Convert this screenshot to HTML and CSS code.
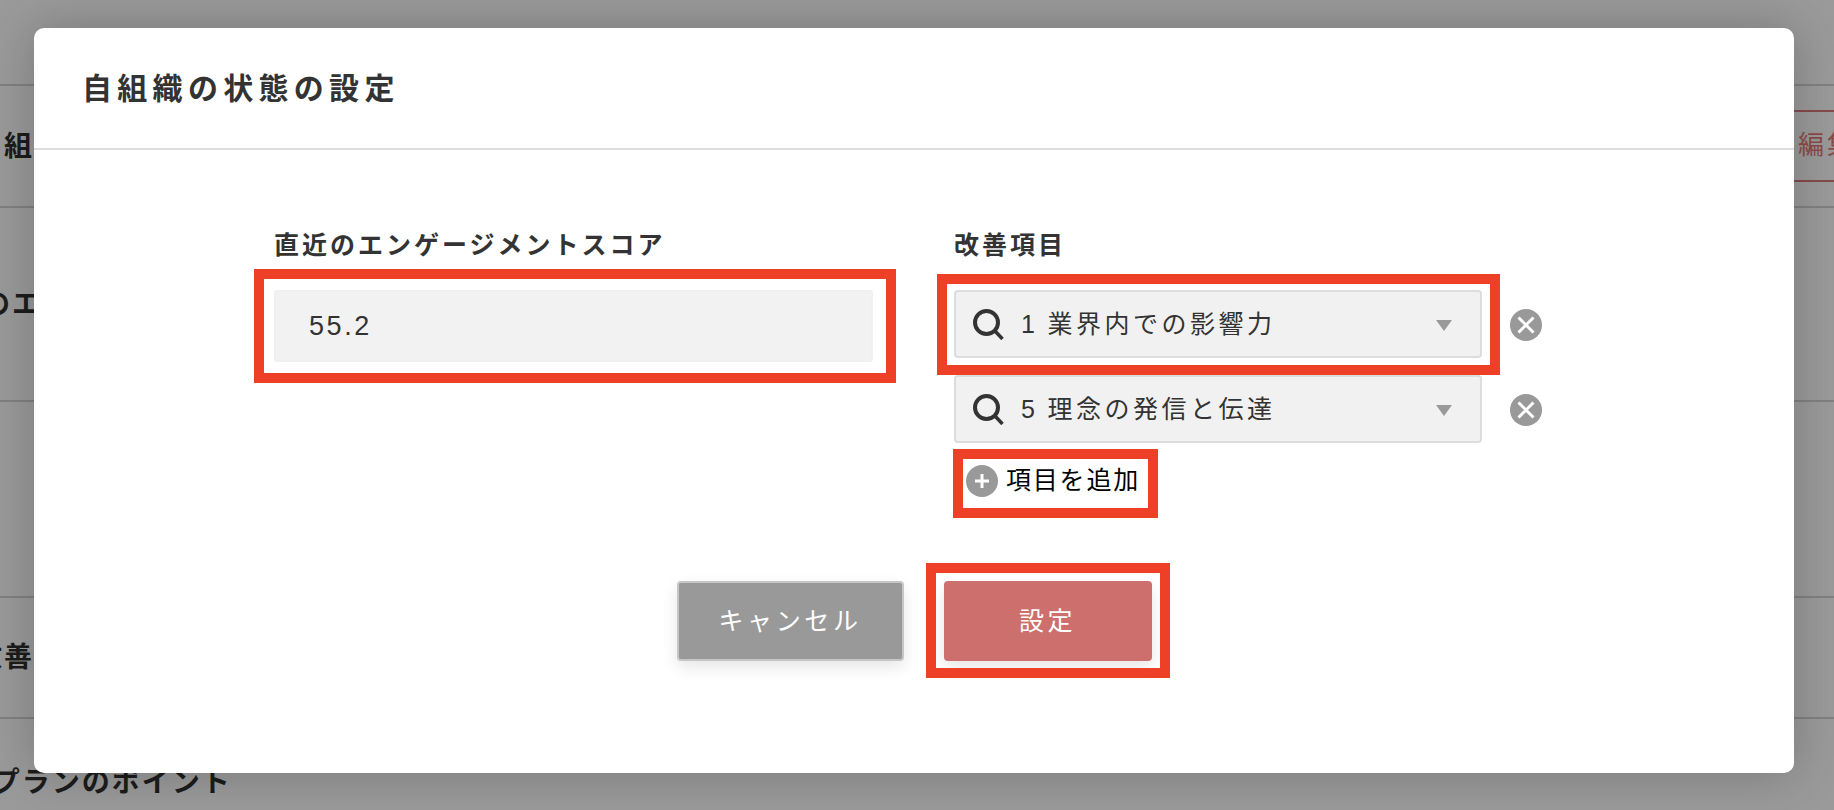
FILE: index.html
```html
<!DOCTYPE html>
<html lang="ja">
<head>
    <title>自組織の状態の設定</title>
    <meta name="viewport" content="width=device-width, initial-scale=1.0">
    <link rel="stylesheet" href="styles.css">
</head>
<body>
    <!-- page behind the dialog -->
    <div class="page">
        <div class="page-row row-first">
            <span class="page-label label-org">自組織の状態</span>
            <span class="edit-btn">編集</span>
        </div>
        <div class="page-row row-score">
            <span class="page-label label-score">直近のエンゲージメントスコア</span>
        </div>
        <div class="page-row row-empty"></div>
        <div class="page-row row-items">
            <span class="page-label label-items">改善項目</span>
        </div>
        <div class="page-row row-plan">
            <span class="page-label label-plan">アクションプランのポイント</span>
        </div>
    </div>

    <div class="modal">
        <div class="modal-header">
            <h1 class="modal-title">自組織の状態の設定</h1>
        </div>

        <div class="modal-body">
            <div class="form-cols">
                <div class="col-score">
                    <div class="field-label">直近のエンゲージメントスコア</div>
                    <div class="score-input">
                        <span>55.2</span>
                        <i class="mark mark-score"></i>
                    </div>
                </div>

                <div class="col-items">
                    <div class="field-label">改善項目</div>
                    <div class="item-row">
                        <div class="item-select">
                            <svg class="search-icon" viewBox="0 0 31 31" fill="none" stroke="currentColor">
                                <circle cx="13.5" cy="13.5" r="11.5" stroke-width="4"/>
                                <path d="M21.5 21.5L29.5 30" stroke-width="3.5"/>
                            </svg>
                            <span class="item-text"><span class="item-no">1</span>業界内での影響力</span>
                            <span class="item-arrow"></span>
                            <i class="mark mark-item"></i>
                        </div>
                        <svg class="round-icon remove-icon" viewBox="0 0 32 32">
                            <circle cx="16" cy="16" r="16" fill="#999"/>
                            <path d="M8.5 8.5L23.5 23.5M23.5 8.5L8.5 23.5" stroke="#fff" stroke-width="3"/>
                        </svg>
                    </div>
                    <div class="item-row item-row-second">
                        <div class="item-select">
                            <svg class="search-icon" viewBox="0 0 31 31" fill="none" stroke="currentColor">
                                <circle cx="13.5" cy="13.5" r="11.5" stroke-width="4"/>
                                <path d="M21.5 21.5L29.5 30" stroke-width="3.5"/>
                            </svg>
                            <span class="item-text"><span class="item-no">5</span>理念の発信と伝達</span>
                            <span class="item-arrow"></span>
                        </div>
                        <svg class="round-icon remove-icon" viewBox="0 0 32 32">
                            <circle cx="16" cy="16" r="16" fill="#999"/>
                            <path d="M8.5 8.5L23.5 23.5M23.5 8.5L8.5 23.5" stroke="#fff" stroke-width="3"/>
                        </svg>
                    </div>
                    <div class="add-item">
                        <svg class="round-icon" viewBox="0 0 32 32">
                            <circle cx="16" cy="16" r="16" fill="#999"/>
                            <path d="M16 9V23M9 16H23" stroke="#fff" stroke-width="3"/>
                        </svg>
                        <span class="add-text">項目を追加</span>
                        <i class="mark mark-add"></i>
                    </div>
                </div>
            </div>

            <div class="button-group">
                <button class="btn btn-cancel">キャンセル</button>
                <button class="btn btn-save">設定<i class="mark mark-save"></i></button>
            </div>
        </div>
    </div>
</body>
</html>
```

FILE: styles.css
```css
:root {
    --overlay: #9a9a9a;
    --line: #818181;
    --mark: #ee4026;
    --text: #333333;
    --field: #f1f1f1;
}

* {
    box-sizing: border-box;
}

html, body {
    height: 100%;
}

body {
    margin: 0;
    background: var(--overlay);
    color: var(--text);
    font-family: "Liberation Sans", "Noto Sans CJK JP", sans-serif;
    overflow: hidden;
}

/* page behind the dialog */
.page {
    padding-top: 84px;
}

.page-row {
    display: flex;
    align-items: center;
    justify-content: space-between;
    border-top: 2px solid var(--line);
    white-space: nowrap;
}

.row-first { height: 122px; }
.row-score { height: 194px; }
.row-empty { height: 196px; }
.row-items { height: 121px; }
.row-plan { height: 128px; }

.page-label {
    padding-bottom: 5px;
    font-size: 28px;
    font-weight: 700;
    letter-spacing: 2px;
    color: #1c1c1c;
}

.label-org { margin-left: -26px; }
.label-score { margin-left: -78px; }
.label-items { margin-left: -26px; }
.label-plan { margin-left: -156px; }

.edit-btn {
    flex: none;
    width: 120px;
    height: 72px;
    margin-right: -80px;
    padding-left: 4px;
    border-top: 2px solid #864b4b;
    border-bottom: 2px solid #864b4b;
    color: #8c4a4a;
    font-size: 26px;
    line-height: 66px;
    letter-spacing: 3px;
}

/* dialog */
.modal {
    position: absolute;
    top: 28px;
    left: 34px;
    width: 1760px;
    height: 745px;
    background: #fff;
    border-radius: 10px;
    box-shadow: 0 0 50px rgba(0, 0, 0, 0.22);
}

.modal-header {
    height: 122px;
    padding: 40px 0 0 48px;
    border-bottom: 2px solid #dddddd;
}

.modal-title {
    margin: 0;
    font-size: 30px;
    line-height: 42px;
    font-weight: 700;
    letter-spacing: 5.3px;
}

.modal-body {
    padding: 75px 0 0 240px;
}

.form-cols {
    display: flex;
    gap: 81px;
}

.col-score {
    width: 599px;
}

.field-label {
    height: 36px;
    margin-bottom: 29px;
    padding-top: 2px;
    font-size: 25px;
    line-height: 36px;
    font-weight: 700;
    letter-spacing: 3px;
    white-space: nowrap;
}

.score-input {
    position: relative;
    height: 72px;
    padding-left: 33px;
    background: #f2f2f2;
    border: 2px solid #f0f0f0;
    border-radius: 3px;
    font-size: 27px;
    line-height: 68px;
    letter-spacing: 2.6px;
}

.item-row {
    display: flex;
    align-items: center;
    gap: 28px;
    margin-bottom: 17px;
}

.item-select {
    position: relative;
    display: flex;
    align-items: center;
    width: 528px;
    height: 68px;
    padding: 0 28px 0 17px;
    background: var(--field);
    border: 2px solid #dddddd;
    border-radius: 4px;
}

.search-icon {
    flex: none;
    width: 31px;
    height: 31px;
    margin-right: 17px;
    color: #333;
}

.item-text {
    flex: 1;
    padding-bottom: 5px;
    font-size: 25px;
    letter-spacing: 3.5px;
    white-space: nowrap;
}

.item-no {
    margin-right: 9px;
}

.item-arrow {
    flex: none;
    width: 0;
    height: 0;
    margin-top: 2px;
    border-left: 8px solid transparent;
    border-right: 8px solid transparent;
    border-top: 11px solid #999;
}

.round-icon {
    flex: none;
    width: 32px;
    height: 32px;
}

.remove-icon {
    margin-top: 2px;
}

.add-item {
    position: relative;
    display: flex;
    align-items: center;
    gap: 8px;
    width: 172px;
    height: 32px;
    margin: 22px 0 0 12px;
    color: #000;
    font-size: 25px;
    letter-spacing: 1.8px;
    white-space: nowrap;
}

.add-text {
    margin-bottom: 6px;
}

.button-group {
    display: flex;
    gap: 40px;
    justify-content: center;
    margin: 84px 0 0 -240px;
}

.btn {
    position: relative;
    height: 80px;
    padding-bottom: 5px;
    color: #fff;
    font-family: inherit;
    font-size: 25px;
    letter-spacing: 3.6px;
    border-radius: 4px;
    cursor: pointer;
    box-shadow: 0 6px 16px rgba(0, 0, 0, 0.1);
}

.btn-cancel {
    width: 227px;
    background: #999999;
    border: 2px solid #c6c6c6;
}

.btn-save {
    width: 208px;
    background: #cd6f6d;
    border: none;
}

/* red annotation frames drawn over the controls */
.mark {
    position: absolute;
    border: 10px solid var(--mark);
    pointer-events: none;
}

.mark-score { inset: -23px -25px -23px -22px; }
.mark-item { inset: -18px -20px -19px -19px; }
.mark-add { inset: -16px -20px -21px -13px; }
.mark-save { inset: -18px -18px -17px -18px; }
```
